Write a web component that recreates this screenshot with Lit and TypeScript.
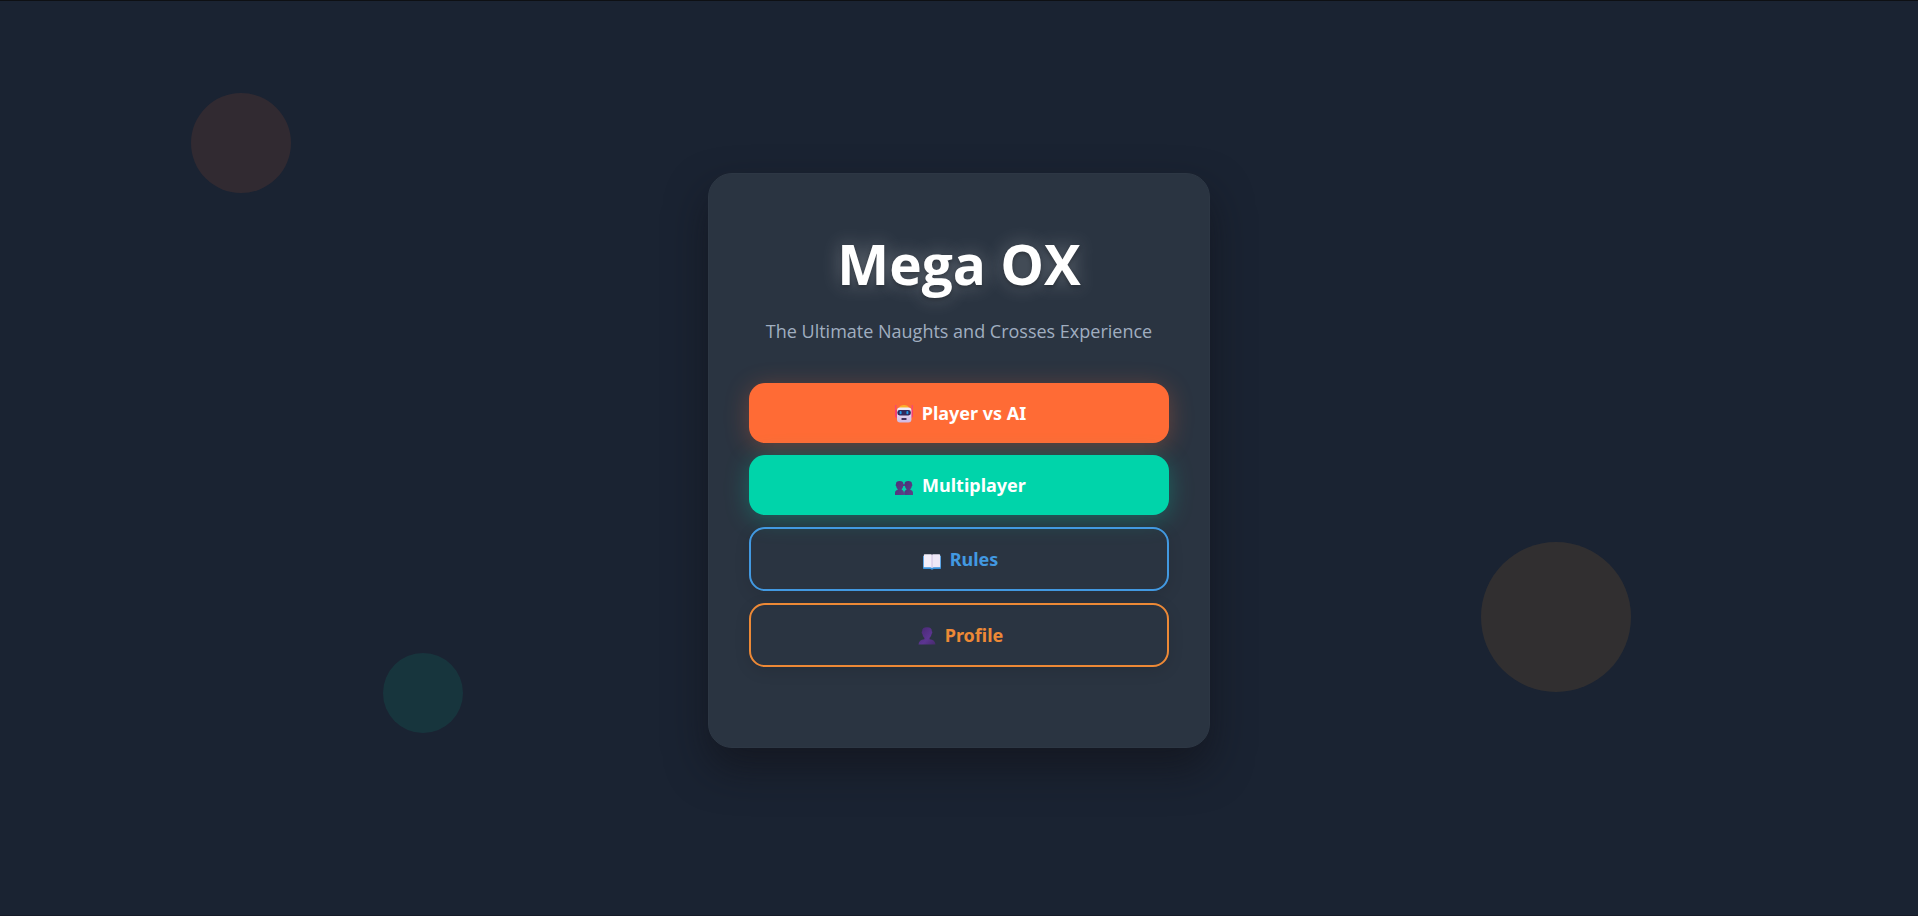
import { LitElement, html, css, svg } from "lit";
import { customElement } from "lit/decorators.js";

const robot = svg`
  <defs>
    <linearGradient id="head" x1="0" y1="0" x2="0" y2="1">
      <stop offset="0" stop-color="#f3eef9" /><stop offset="1" stop-color="#cfb8e2" />
    </linearGradient>
  </defs>
  <path d="M0 0h1.400v6H0zM16.600 0H18v6h-1.400z" fill="#f8496c" />
  <path d="M0 5h3v8H1.500L0 11.500zM15 5h3v6.500L16.500 13H15z" fill="#f8406c" />
  <path d="M4 3.400C4.400 1 6.400 0 9 0s4.600 1 5 3.400z" fill="#fbb02c" />
  <rect x="2" y="2.400" width="14.400" height="15.200" rx="3" fill="url(#head)" />
  <rect x="2.300" y="5" width="13.600" height="5.400" rx="2.400" fill="#34285a" />
  <rect x="4.600" y="6" width="2" height="3.200" rx="0.900" fill="#1f9bea" />
  <rect x="11.400" y="6" width="2" height="3.200" rx="0.900" fill="#1f9bea" />
  <rect x="6.500" y="13" width="5" height="2" rx="0.500" fill="#43305c" />
`;

const people = svg`
  <defs>
    <linearGradient id="duo" x1="0" y1="0" x2="1" y2="1">
      <stop offset="0" stop-color="#4a2f78" /><stop offset="1" stop-color="#5f4288" />
    </linearGradient>
  </defs>
  <g fill="url(#duo)">
    <path d="M1 7.200C.8 5 2.200 4 4.700 4s3.900 1 3.700 3.200c.6.200.5 1.700-.2 2-.2 1.300-.7 2.200-1.400 2.900v1c1.500.3 2.200 1.400 2.200 3V18H0v-1.900c0-1.800.8-2.700 2.600-3v-1c-.7-.7-1.200-1.600-1.400-2.900-.7-.3-.8-1.800-.2-2z" />
    <path d="M9.600 7.200C9.400 5 10.800 4 13.300 4s3.900 1 3.700 3.200c.6.200.5 1.700-.2 2-.2 1.300-.7 2.200-1.400 2.900v1c1.800.3 2.600 1.200 2.600 3V18H9.200v-1.900c0-1.600.7-2.700 2.200-3v-1c-.7-.7-1.200-1.600-1.400-2.900-.9-.3-1-1.800-.4-2z" />
    <path d="M8 7.400h2v1.600H8z" />
  </g>
`;

const book = svg`
  <path d="M0 5h18v12.300c0 .5-.3.700-.7.700h-6.800c-.5.900-2.500.9-3 0H.7c-.4 0-.7-.2-.7-.7z" fill="#3a93dd" />
  <path d="M.8 4.200C.8 3.600 1.300 3.300 2 3.300H7.500c.9 0 1.500.3 1.500.9V17c-.5-.6-1-.8-1.800-.8H.8z" fill="#f4effa" />
  <path d="M17.200 4.200c0-.6-.5-.9-1.200-.9H10.500C9.600 3.300 9 3.600 9 4.200V17c.5-.6 1-.8 1.800-.8h6.400z" fill="#efe8f7" />
  <path d="M9 4v12.800" stroke="#c9b6dc" stroke-width="0.800" />
`;

const person = svg`
  <defs>
    <linearGradient id="solo" x1="0" y1="0" x2="1" y2="1">
      <stop offset="0" stop-color="#46286f" /><stop offset="0.600" stop-color="#5c3592" /><stop offset="1" stop-color="#462a6b" />
    </linearGradient>
  </defs>
  <path d="M4.200 4.300C4 1.500 5.600 0.300 9 0.300s5 1.200 4.800 4c.8.200.7 2.300-.2 2.600-.3 2-1 3-2 3.900v1.400c3.600.4 5.700 2 5.900 5.300H.5c.2-3.300 2.300-4.900 5.900-5.300v-1.400c-1-.9-1.700-1.900-2-3.900-.9-.3-1-2.400-.2-2.600z" fill="url(#solo)" />
`;

@customElement("app-root")
export class AppRoot extends LitElement {
  static styles = css`
    :host {
      display: block;
      box-sizing: border-box;
      position: relative;
      overflow: hidden;
      min-height: 100vh;
      background: #1a2332;
      border-top: 1px solid #0e1014;
      border-bottom: 1px solid #161b28;
      font-family: "Noto Sans", sans-serif;
    }
    .shape {
      position: absolute;
      border-radius: 50%;
      opacity: 0.1;
    }
    .coral {
      width: 100px;
      height: 100px;
      top: 10.1%;
      left: 9.95%;
      background: #ff6b35;
    }
    .amber {
      width: 150px;
      height: 150px;
      top: 59.2%;
      right: 14.95%;
      background: #ff9a2c;
    }
    .mint {
      width: 80px;
      height: 80px;
      bottom: 19.9%;
      left: 19.95%;
      background: #00d4aa;
    }
    .stage {
      display: flex;
      align-items: center;
      justify-content: center;
      min-height: calc(100vh - 2px);
      padding-top: 5px;
      box-sizing: border-box;
    }
    .card {
      position: relative;
      box-sizing: border-box;
      width: 100%;
      max-width: 502px;
      padding: 48px 40px 80px;
      border: 1px solid #2d3744;
      border-radius: 24px;
      background: #2a3441;
      box-shadow: 0 20px 40px rgba(16, 16, 24, 0.6);
      text-align: center;
    }
    h1 {
      margin: 0 0 9px;
      font-family: "Open Sans", sans-serif;
      font-size: 55px;
      line-height: 84px;
      font-weight: 700;
      color: #fff;
      text-shadow: 0 2px 4px rgba(0, 0, 0, 0.3), 0 0 20px rgba(255, 255, 255, 0.3);
    }
    .tagline {
      margin: 0 0 36px;
      font-family: "Open Sans", sans-serif;
      font-size: 18px;
      line-height: 32px;
      color: #a0aec0;
    }
    .menu {
      display: flex;
      flex-direction: column;
      gap: 12px;
    }
    button {
      display: flex;
      align-items: center;
      justify-content: center;
      gap: 9px;
      padding: 18px 32px 18px 35px;
      border: 0 solid;
      border-radius: 16px;
      background: transparent;
      color: #fff;
      font: 700 18px/24px "Noto Sans", sans-serif;
      cursor: pointer;
      box-shadow: 0 4px 16px rgba(0, 0, 0, 0.1);
    }
    button svg {
      width: 18px;
      height: 18px;
      margin-top: 2px;
      overflow: visible;
    }
    .ai {
      background: #ff6b35;
      box-shadow: 0 4px 24px rgba(255, 107, 53, 0.3);
    }
    .multi {
      background: #00d4aa;
      box-shadow: 0 4px 24px rgba(0, 212, 170, 0.3);
    }
    .rules {
      border-width: 2px;
      color: #4299e1;
    }
    .profile {
      border-width: 2px;
      color: #ed8936;
    }
  `;

  private item(kind: string, label: string, icon: unknown) {
    return html`<button class=${kind} type="button">
      <svg viewBox="0 0 18 18" fill="none" aria-hidden="true">${icon}</svg>
      <span>${label}</span>
    </button>`;
  }

  render() {
    return html`
      <div class="shape coral"></div>
      <div class="shape amber"></div>
      <div class="shape mint"></div>
      <div class="stage">
        <main class="card">
          <h1>Mega OX</h1>
          <p class="tagline">The Ultimate Naughts and Crosses Experience</p>
          <nav class="menu">
            ${this.item("ai", "Player vs AI", robot)}
            ${this.item("multi", "Multiplayer", people)}
            ${this.item("rules", "Rules", book)}
            ${this.item("profile", "Profile", person)}
          </nav>
        </main>
      </div>
    `;
  }
}
